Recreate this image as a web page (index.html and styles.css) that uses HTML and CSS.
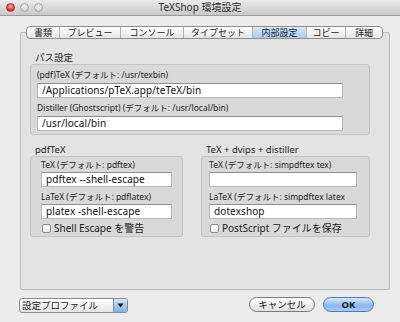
FILE: index.html
```html
<!DOCTYPE html>
<html lang="ja">
<head>
    <meta charset="UTF-8">
    <title>TeXShop 環境設定</title>
    <link rel="stylesheet" href="styles.css">
</head>
<body>
    <div class="window">
        <div class="titlebar">
            <div class="lights">
                <span class="light light-close"></span>
                <span class="light"></span>
                <span class="light"></span>
            </div>
            <div class="title">TeXShop 環境設定</div>
            <div></div>
        </div>

        <div class="tabs">
            <div class="tab">書類</div>
            <div class="tab">プレビュー</div>
            <div class="tab">コンソール</div>
            <div class="tab">タイプセット</div>
            <div class="tab tab-active">内部設定</div>
            <div class="tab">コピー</div>
            <div class="tab">詳細</div>
        </div>

        <div class="pane">
            <div class="section-label">パス設定</div>
            <div class="group group-paths">
                <div class="field-label">(pdf)TeX (デフォルト: /usr/texbin)</div>
                <div class="field">/Applications/pTeX.app/teTeX/bin</div>
                <div class="field-label">Distiller (Ghostscript) (デフォルト: /usr/local/bin)</div>
                <div class="field">/usr/local/bin</div>
            </div>

            <div class="engines">
                <div class="engine">
                    <div class="section-label">pdfTeX</div>
                    <div class="group group-pdf">
                        <div class="field-label">TeX (デフォルト: pdftex)</div>
                        <div class="field">pdftex --shell-escape</div>
                        <div class="field-label">LaTeX (デフォルト: pdflatex)</div>
                        <div class="field">platex -shell-escape</div>
                        <div class="check-row">
                            <span class="checkbox"></span>
                            <span>Shell Escape を警告</span>
                        </div>
                    </div>
                </div>
                <div class="engine">
                    <div class="section-label">TeX + dvips + distiller</div>
                    <div class="group group-dist">
                        <div class="field-label">TeX (デフォルト: simpdftex tex)</div>
                        <div class="field"></div>
                        <div class="field-label">LaTeX (デフォルト: simpdftex latex</div>
                        <div class="field">dotexshop</div>
                        <div class="check-row">
                            <span class="checkbox"></span>
                            <span>PostScript ファイルを保存</span>
                        </div>
                    </div>
                </div>
            </div>
        </div>

        <div class="footer">
            <div class="popup">
                <span class="popup-text">設定プロファイル</span>
                <span class="popup-arrow">
                    <svg width="7" height="5" viewBox="0 0 7 5"><path d="M0.5 0.5h6l-3 4z" fill="#111"/></svg>
                </span>
            </div>
            <div class="spacer"></div>
            <div class="button">キャンセル</div>
            <div class="button button-default">OK</div>
        </div>
    </div>
</body>
</html>
```

FILE: styles.css
```css
body {
    margin: 0;
    font-family: "Noto Sans", "Noto Sans CJK JP", sans-serif;
    color: #1a1a1a;
}

.window {
    width: 400px;
    height: 322px;
    background-color: #ececec;
    overflow: hidden;
}

/* title bar */
.titlebar {
    height: 15px;
    border-bottom: 1px solid #9c9c9c;
    background: linear-gradient(#ebebeb, #c9c9c9);
    display: grid;
    grid-template-columns: 1fr auto 1fr;
    align-items: center;
}

.lights {
    display: flex;
    gap: 5px;
    padding-left: 6px;
}

.light {
    width: 9px;
    height: 9px;
    border-radius: 50%;
    box-sizing: border-box;
    border: 1px solid #a4a4a4;
    background: radial-gradient(circle at 50% 35%, #f4f4f4, #c8c8c8);
}

.light-close {
    border-color: #a33;
    background: radial-gradient(circle at 50% 35%, #ffb3a8, #e0281c 70%, #b01a10);
}

.title {
    font-size: 10px;
    line-height: 15px;
    color: #2a2a2a;
}

/* tabs */
.tabs {
    position: relative;
    z-index: 1;
    display: grid;
    grid-template-columns: 32px 61px 63px 69px 54px 39px 37px;
    width: 357px;
    height: 13px;
    box-sizing: border-box;
    margin: 10px 0 0 26px;
    border: 1px solid #8c8c8c;
    border-radius: 4px;
    overflow: hidden;
    background: linear-gradient(#ffffff, #e6e6e6);
}

.tab {
    font-size: 9px;
    line-height: 11px;
    text-align: center;
    border-left: 1px solid #b4b4b4;
    color: #222;
}

.tab:first-child {
    border-left: none;
}

.tab-active {
    background: linear-gradient(#d8e9fb, #a7cbf0);
}

/* pane */
.pane {
    width: 370px;
    height: 258px;
    box-sizing: border-box;
    margin: -7px 0 0 20px;
    padding: 19px 19px 0 9px;
    border: 1px solid #bababa;
    border-radius: 2px;
    background-color: #e3e3e3;
}

.section-label {
    font-size: 9.5px;
    line-height: 12px;
    padding-left: 5px;
    color: #222;
}

.group {
    border: 1px solid #c3c3c3;
    border-radius: 3px;
    background-color: #d9d9d9;
}

.group-paths {
    padding: 4px 26px 3px 6px;
}

.group-pdf {
    padding: 2px 10px 2px 10px;
}

.group-dist {
    padding: 2px 12px 2px 7px;
}

.field-label {
    font-size: 8.5px;
    line-height: 11px;
    white-space: nowrap;
    color: #222;
}

.field {
    height: 15px;
    box-sizing: border-box;
    margin-top: 3px;
    padding: 0 4px;
    border: 1px solid #b8b8b8;
    border-top-color: #8e8e8e;
    background-color: #fff;
    font-size: 10px;
    line-height: 13px;
    letter-spacing: 0.1px;
    white-space: nowrap;
    color: #111;
}

.field + .field-label {
    margin-top: 4px;
}

.group-pdf .field,
.group-dist .field {
    margin-top: 2px;
}

.engines {
    display: grid;
    grid-template-columns: 153px 169px;
    column-gap: 18px;
    margin-top: 9px;
}

.check-row {
    display: flex;
    align-items: center;
    gap: 3px;
    margin-top: 3px;
    padding-left: 1px;
    font-size: 10px;
    line-height: 12px;
    white-space: nowrap;
}

.checkbox {
    width: 9px;
    height: 9px;
    box-sizing: border-box;
    border: 1px solid #8a8a8a;
    border-radius: 2px;
    background: linear-gradient(#ffffff, #ececec);
}

/* footer */
.footer {
    display: flex;
    align-items: flex-start;
    gap: 8px;
    padding: 7px 26px 0 19px;
}

.spacer {
    flex: 1;
}

.popup {
    display: flex;
    width: 109px;
    height: 15px;
    box-sizing: border-box;
    margin-top: 1px;
    border: 1px solid #8a8a8a;
    border-radius: 3px;
    overflow: hidden;
    background: linear-gradient(#ffffff, #e4e4e4);
}

.popup-text {
    flex: 1;
    font-size: 9.5px;
    line-height: 13px;
    padding-left: 2px;
}

.popup-arrow {
    width: 13px;
    border-left: 1px solid #8a8a8a;
    background: linear-gradient(#d3e5f9, #7fb0ea);
    display: flex;
    align-items: center;
    justify-content: center;
}

.button {
    height: 15px;
    box-sizing: border-box;
    border: 1px solid #7a7a7a;
    border-radius: 8px;
    background: linear-gradient(#ffffff, #e0e0e0);
    font-size: 9.5px;
    line-height: 13px;
    text-align: center;
    width: 66px;
}

.button-default {
    width: 51px;
    border-color: #5479b3;
    background: linear-gradient(#d6e7fb, #89b7ee 60%, #a9cdf5);
    font-weight: bold;
}
```
